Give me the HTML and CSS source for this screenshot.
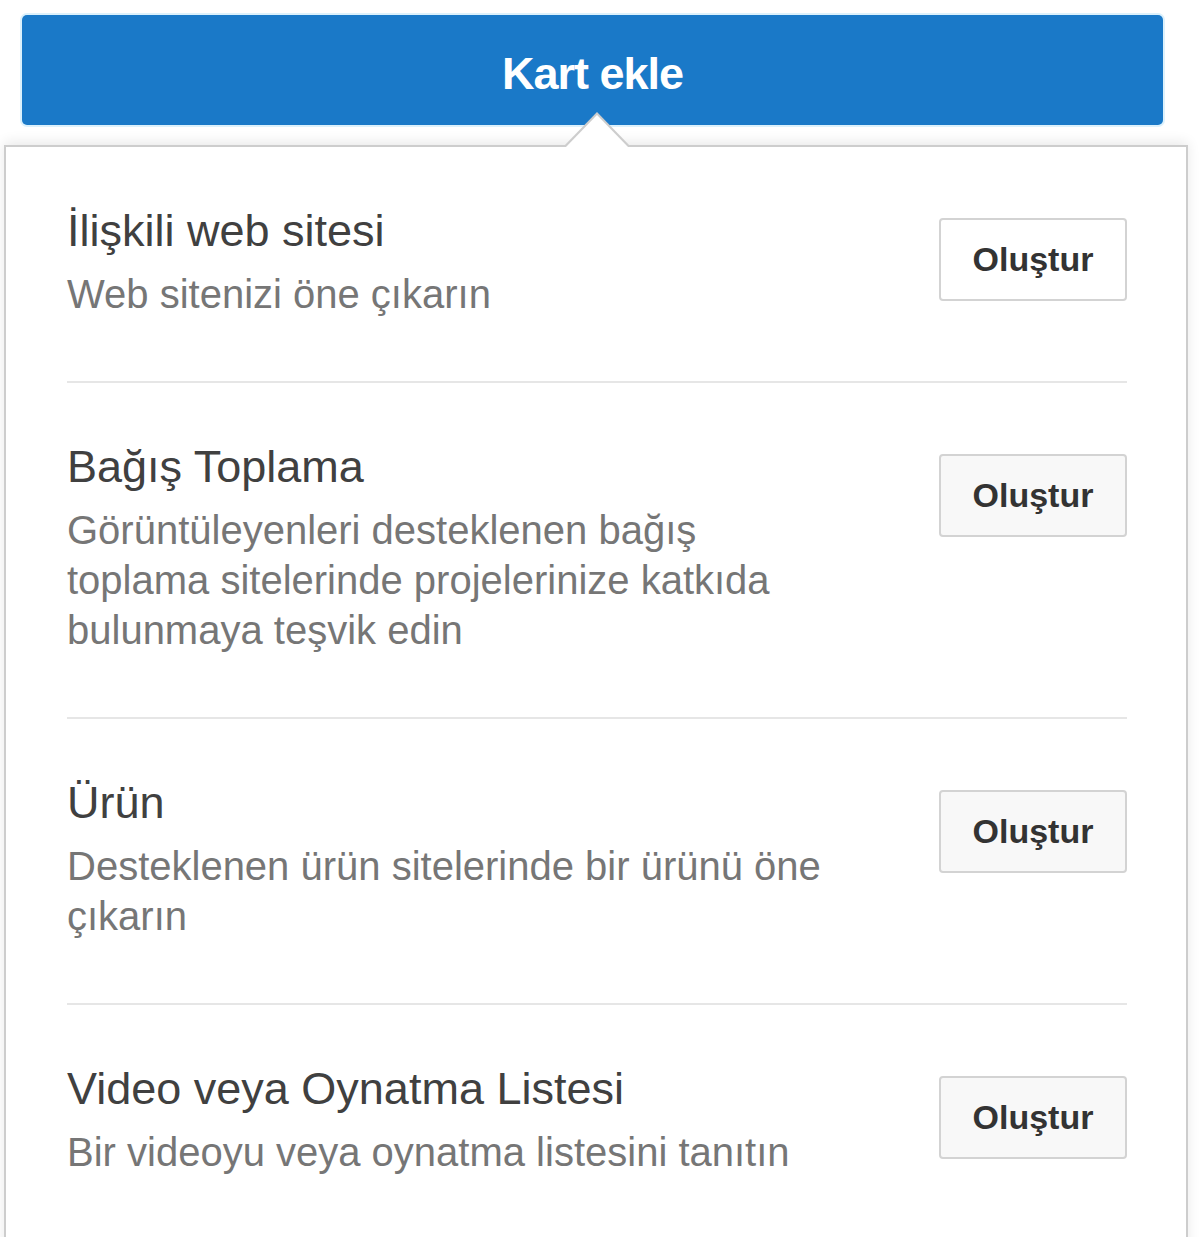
FILE: index.html
```html
<!DOCTYPE html>
<html lang="tr">
<head>
<meta charset="utf-8">
<title>Kart ekle</title>
<link rel="stylesheet" href="styles.css">
</head>
<body>
<div class="page">
  <div class="add-card">Kart ekle</div>
  <div class="panel">
    <span class="caret"></span>
    <div class="list">
      <div class="item">
        <div class="text">
          <div class="title">İlişkili web sitesi</div>
          <div class="desc">Web sitenizi öne çıkarın</div>
        </div>
        <button class="create create-first">Oluştur</button>
      </div>
      <div class="item">
        <div class="text">
          <div class="title">Bağış Toplama</div>
          <div class="desc">Görüntüleyenleri desteklenen bağış toplama sitelerinde projelerinize katkıda bulunmaya teşvik edin</div>
        </div>
        <button class="create">Oluştur</button>
      </div>
      <div class="item">
        <div class="text">
          <div class="title">Ürün</div>
          <div class="desc">Desteklenen ürün sitelerinde bir ürünü öne çıkarın</div>
        </div>
        <button class="create">Oluştur</button>
      </div>
      <div class="item">
        <div class="text">
          <div class="title">Video veya Oynatma Listesi</div>
          <div class="desc">Bir videoyu veya oynatma listesini tanıtın</div>
        </div>
        <button class="create">Oluştur</button>
      </div>
    </div>
  </div>
</div>
</body>
</html>
```

FILE: styles.css
```css
html, body {
  margin: 0;
  padding: 0;
  background: #ffffff;
  font-family: "Liberation Sans", Arial, sans-serif;
  overflow: hidden;
}

.page {
  padding-top: 15px;
}

.add-card {
  margin: 0 37px 0 22px;
  height: 110px;
  box-sizing: border-box;
  padding-top: 8px;
  background: #1a79c8;
  border-radius: 5px;
  box-shadow: 0 0 0 2px #dcf1fc;
  color: #ffffff;
  font-weight: bold;
  font-size: 45px;
  letter-spacing: -1px;
  display: flex;
  align-items: center;
  justify-content: center;
}

.panel {
  position: relative;
  margin: 20px 12px 0 4px;
  height: 1120px;
  border: 2px solid #cdcdcd;
  border-bottom: none;
  background: #ffffff;
  box-shadow: 0 -3px 12px rgba(0, 0, 0, 0.09);
}

.caret {
  position: absolute;
  left: 557px;
  top: -35px;
  width: 0;
  height: 0;
  border-left: 34px solid transparent;
  border-right: 34px solid transparent;
  border-bottom: 35px solid #cdcdcd;
}

.caret::after {
  content: "";
  position: absolute;
  left: -32px;
  top: 3px;
  width: 0;
  height: 0;
  border-left: 32px solid transparent;
  border-right: 32px solid transparent;
  border-bottom: 33px solid #ffffff;
}

.list {
  padding: 0 59px 0 61px;
}

.item {
  display: flex;
  justify-content: space-between;
  align-items: flex-start;
  padding: 58px 0 62px;
  border-bottom: 2px solid #e6e6e6;
}

.item:last-child {
  border-bottom: none;
}

.text {
  max-width: 768px;
}

.title {
  font-size: 45px;
  line-height: 52px;
  color: #404040;
}

.desc {
  margin-top: 12px;
  font-size: 40px;
  line-height: 50px;
  color: #767676;
}

.create {
  flex-shrink: 0;
  margin-top: 13px;
  width: 188px;
  height: 83px;
  box-sizing: border-box;
  border: 2px solid #d3d3d3;
  border-radius: 4px;
  background: #f8f8f8;
  color: #333333;
  font-family: "Liberation Sans", Arial, sans-serif;
  font-weight: bold;
  font-size: 34px;
  padding: 0;
}

.create-first {
  background: #ffffff;
}
```
